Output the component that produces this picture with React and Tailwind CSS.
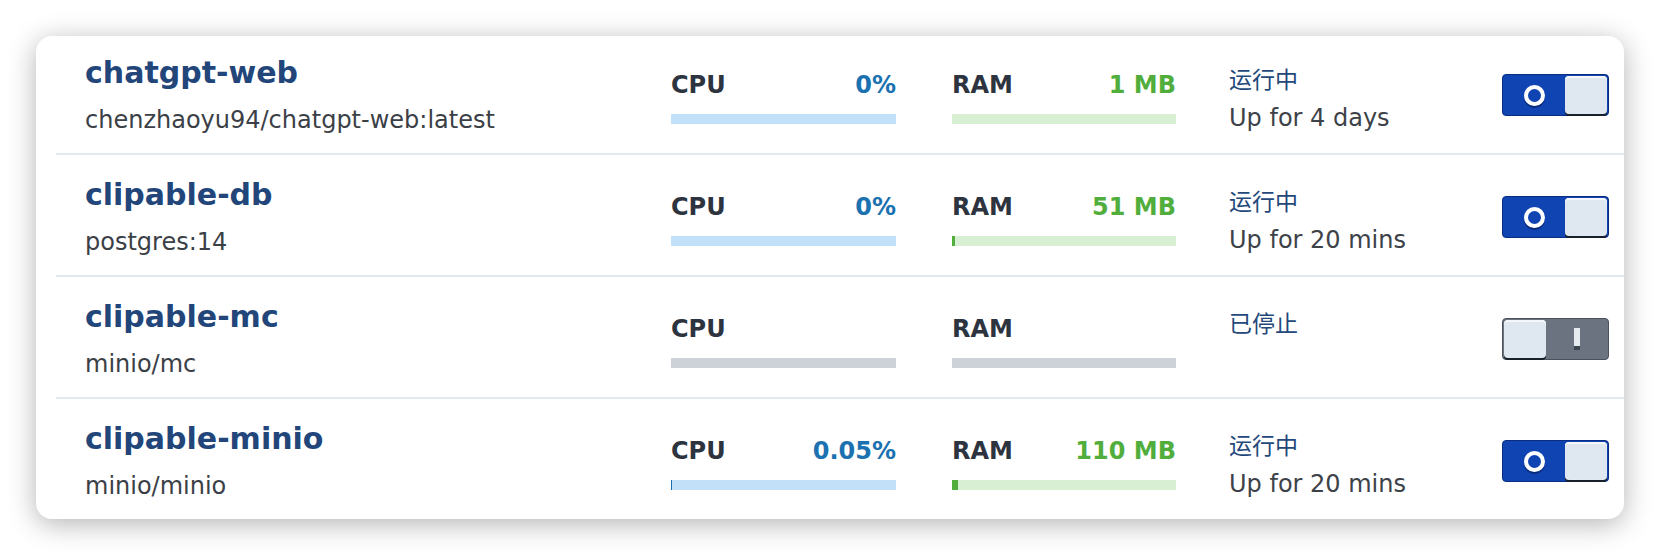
import React from 'react';

const containers = [
  { name: 'chatgpt-web', image: 'chenzhaoyu94/chatgpt-web:latest', running: true, cpu: '0%', cpuFill: 0, ram: '1 MB', ramFill: 0, uptime: 'Up for 4 days' },
  { name: 'clipable-db', image: 'postgres:14', running: true, cpu: '0%', cpuFill: 0, ram: '51 MB', ramFill: 3, uptime: 'Up for 20 mins' },
  { name: 'clipable-mc', image: 'minio/mc', running: false },
  { name: 'clipable-minio', image: 'minio/minio', running: true, cpu: '0.05%', cpuFill: 1, ram: '110 MB', ramFill: 6, uptime: 'Up for 20 mins' },
];

const Toggle = ({ on }) => {
  if (on) {
    return (
      <div className="w-[107px] h-[42px] rounded-[4px] bg-[#1144b3] border border-[#0b2d80] flex items-center p-[1px]">
        <div className="flex-1 flex items-center justify-center">
          <div className="w-[21px] h-[21px] rounded-full border-[4px] border-white shadow-[0_2px_0_#0a2a7a]" />
        </div>
        <div className="w-[42px] h-[38px] rounded-[4px] bg-[#dfe7f0] shadow-[0_2px_0_#18202c,inset_0_2px_0_#f4f7fb]" />
      </div>
    );
  }
  return (
    <div className="w-[107px] h-[42px] rounded-[4px] bg-[#6b7380] border border-[#4b525c] flex items-center p-[1px]">
      <div className="w-[42px] h-[38px] rounded-[4px] bg-[#dfe7f0] shadow-[0_2px_0_#18202c,inset_0_2px_0_#f4f7fb]" />
      <div className="flex-1 flex items-center justify-center">
        <div className="w-[6px] h-[22px] flex flex-col">
          <div className="flex-1 bg-[#e6e9ee]" />
          <div className="h-[4px] bg-[#3a4350]" />
        </div>
      </div>
    </div>
  );
};

const Meter = ({ label, value, fill, kind, running }) => {
  const bg = !running ? 'bg-[#cdd2d9]' : kind === 'cpu' ? 'bg-[#c2e0f8]' : 'bg-[#d9efd4]';
  const fg = kind === 'cpu' ? 'bg-[#1f6fb0]' : 'bg-[#52ae3c]';
  const valueColor = kind === 'cpu' ? 'text-[#1c72b0]' : 'text-[#52ae3c]';
  return (
    <div className="flex flex-col pt-[37px]">
      <div className="flex justify-between items-center h-[30px] text-[24px] font-bold leading-[30px]">
        <span className="text-[#2d3440]">{label}</span>
        {running && <span className={valueColor}>{value}</span>}
      </div>
      <div className={`mt-[14px] h-[10px] ${bg} flex`}>
        {running && fill > 0 && <div className={fg} style={{ width: fill }} />}
      </div>
    </div>
  );
};

const Row = ({ c, first }) => (
  <div className={`ml-[20px] flex ${first ? '-mt-[3px] h-[120px]' : 'h-[122px] border-t-2 border-[#e4e9f0]'}`}>
    <div className="w-[615px] pl-[29px] pt-[22px] flex flex-col">
      <div className="text-[30px] font-bold leading-[36px] text-[#22467a]">{c.name}</div>
      <div className="mt-[14px] text-[24px] leading-[30px] text-[#3b4047]">{c.image}</div>
    </div>
    <div className="w-[225px]">
      <Meter label="CPU" value={c.cpu} fill={c.cpuFill} kind="cpu" running={c.running} />
    </div>
    <div className="w-[224px] ml-[56px]">
      <Meter label="RAM" value={c.ram} fill={c.ramFill} kind="ram" running={c.running} />
    </div>
    <div className="w-[273px] ml-[53px] pt-[32px] flex flex-col">
      <div className="text-[23px] leading-[30px] text-[#24487a]">{c.running ? '运行中' : '已停止'}</div>
      {c.running && <div className="mt-[8px] text-[24px] leading-[30px] text-[#3d4249]">{c.uptime}</div>}
    </div>
    <div className="pt-[41px]">
      <Toggle on={c.running} />
    </div>
  </div>
);

export default function App() {
  return (
    <div className="w-[1660px] h-[556px] bg-white p-[36px] font-['DejaVu_Sans','Noto_Sans_CJK_SC',sans-serif]">
      <div className="w-[1588px] h-[483px] bg-white rounded-[16px] overflow-hidden shadow-[0_5px_28px_rgba(0,0,0,0.3)]">
        {containers.map((c, i) => (
          <Row key={c.name} c={c} first={i === 0} />
        ))}
      </div>
    </div>
  );
}
